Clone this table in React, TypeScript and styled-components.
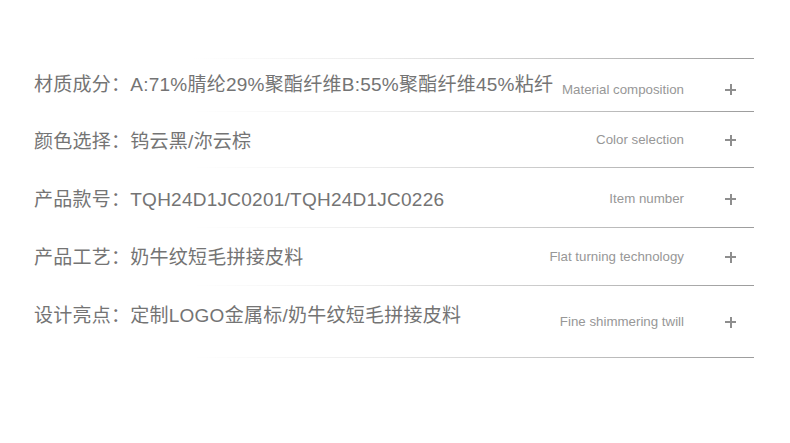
import * as React from 'react';
import styled, { createGlobalStyle } from 'styled-components';

const GlobalStyle = createGlobalStyle`
    html, body {
        margin: 0;
        padding: 0;
        background: #fff;
    }
    body {
        font-family: "Liberation Sans", "Noto Sans CJK SC", sans-serif;
    }
`;

const LINE = 'linear-gradient(to right, rgba(160,160,160,0) 0%, rgba(160,160,160,0) 22%, #ececec 48%, #c4c4c4 75%, #9c9c9c 100%)';

const Page = styled.div`
    width: 790px;
    height: 443px;
    padding: 58px 0 0 34px;
    box-sizing: border-box;
`;

const SpecList = styled.ul`
    list-style: none;
    margin: 0;
    padding: 1px 0 0;
    width: 720px;
    background: ${LINE} top left / 100% 1px no-repeat;
`;

interface SpecRowProps {
    readonly $height: number;
}

const SpecRow = styled.li<SpecRowProps>`
    display: flex;
    align-items: center;
    height: ${(p) => p.$height}px;
    box-sizing: border-box;
    padding-right: 18px;
    background: ${LINE} bottom left / 100% 1px no-repeat;
`;

interface ShiftProps {
    readonly $shift: number;
}

const SpecLabel = styled.div<ShiftProps>`
    flex: 1 1 auto;
    min-width: 0;
    white-space: nowrap;
    font-family: "Liberation Sans", "Noto Sans CJK SC", sans-serif;
    font-size: 19px;
    line-height: 24px;
    letter-spacing: 0.25px;
    color: #747474;
    margin-top: ${(p) => p.$shift * 2}px;
`;

const SpecSide = styled.div<ShiftProps>`
    display: flex;
    align-items: center;
    flex-shrink: 0;
    margin-top: ${(p) => p.$shift * 2}px;
`;

const SpecEnglish = styled.span`
    font-family: "Liberation Sans", Arial, sans-serif;
    font-size: 13.3px;
    line-height: 16px;
    color: #979797;
    margin-right: 41px;
    white-space: nowrap;
`;

const PlusIcon = styled.span`
    position: relative;
    display: block;
    width: 11px;
    height: 11px;
    &::before, &::after {
        content: '';
        position: absolute;
        background: #8e8e8e;
    }
    &::before {
        left: 0;
        right: 0;
        top: 4.5px;
        height: 2px;
    }
    &::after {
        top: 0;
        bottom: 0;
        left: 4.5px;
        width: 2px;
    }
`;

const specs = [
    { label: '材质成分：A:71%腈纶29%聚酯纤维B:55%聚酯纤维45%粘纤', en: 'Material composition', height: 53, labelShift: -1, sideShift: 4 },
    { label: '颜色选择：钨云黑/沵云棕', en: 'Color selection', height: 56, labelShift: 2, sideShift: 0 },
    { label: '产品款号：TQH24D1JC0201/TQH24D1JC0226', en: 'Item number', height: 60, labelShift: 2, sideShift: 1 },
    { label: '产品工艺：奶牛纹短毛拼接皮料', en: 'Flat turning technology', height: 58, labelShift: 1, sideShift: 0 },
    { label: '设计亮点：定制LOGO金属标/奶牛纹短毛拼接皮料', en: 'Fine shimmering twill', height: 72, labelShift: -6, sideShift: 0 },
];

export default function App() {
    return (
        <>
            <GlobalStyle />
            <Page>
                <SpecList>
                    {specs.map((s) => (
                        <SpecRow key={s.en} $height={s.height}>
                            <SpecLabel $shift={s.labelShift}>{s.label}</SpecLabel>
                            <SpecSide $shift={s.sideShift}>
                                <SpecEnglish>{s.en}</SpecEnglish>
                                <PlusIcon />
                            </SpecSide>
                        </SpecRow>
                    ))}
                </SpecList>
            </Page>
        </>
    );
}
